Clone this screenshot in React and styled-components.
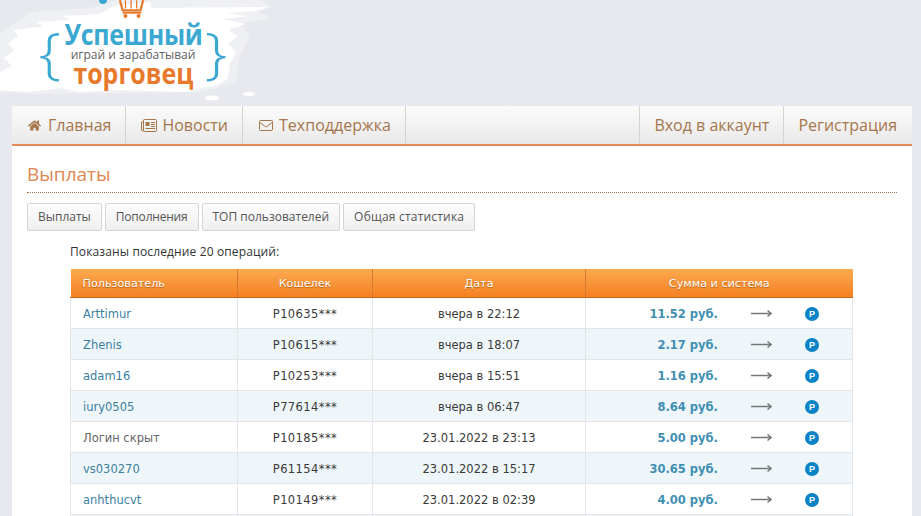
import styled, { createGlobalStyle } from "styled-components";
import { FaHome } from "react-icons/fa";

const rows = [
  { user: "Arttimur", wallet: "P10635***", date: "вчера в 22:12", sum: "11.52 руб." },
  { user: "Zhenis", wallet: "P10615***", date: "вчера в 18:07", sum: "2.17 руб." },
  { user: "adam16", wallet: "P10253***", date: "вчера в 15:51", sum: "1.16 руб." },
  { user: "iury0505", wallet: "P77614***", date: "вчера в 06:47", sum: "8.64 руб." },
  { user: "Логин скрыт", hidden: true, wallet: "P10185***", date: "23.01.2022 в 23:13", sum: "5.00 руб." },
  { user: "vs030270", wallet: "P61154***", date: "23.01.2022 в 15:17", sum: "30.65 руб." },
  { user: "anhthucvt", wallet: "P10149***", date: "23.01.2022 в 02:39", sum: "4.00 руб." },
  { user: "", wallet: "", date: "", sum: "" }
];

export default function App() {
  return (
    <>
      <GlobalStyle />
      <Page>
        <Header>
          <Logo>
            <Brush viewBox="0 0 280 106">
              {/* светлый слой мазка */}
              <path
                d="M0 34 L30 12 L90 8 L118 0 L260 0 L272 7 L258 12 L270 18 L240 24 L250 36 L238 60 L236 82 L200 92 L40 94 L0 92 Z"
                fill="#eff0f3"
              />
              {/* белый слой мазка */}
              <path
                d="M0 90 L0 72 L12 66 L4 58 L14 50 L8 44 L18 36 L14 30 L44 26 L36 22 L70 20 L62 16 L100 14 L114 6 L150 2 L152 8 L268 7 L256 11 L226 13 L250 16 L222 19 L246 24 L228 30 L238 36 L228 44 L236 52 L230 64 L228 78 L216 86 L200 88 L188 92 L120 90 L80 92 L60 88 L30 92 Z"
                fill="#fff"
              />
              <ellipse cx="212" cy="98" rx="7" ry="2.6" fill="#fff" />
              <ellipse cx="249" cy="94" rx="6" ry="2.2" fill="#fff" />
              <circle cx="103" cy="0" r="4" fill="#3ba8d2" />
            </Brush>
            <Cart viewBox="0 0 30 20">
              <path d="M2 0 L5 11 L24 11 L27 0" fill="none" stroke="#e8792b" strokeWidth="2.4" />
              <path d="M8 0 V9 M14 0 V9 M20 0 V9" stroke="#e8792b" strokeWidth="1.4" />
              <path d="M5 13.5 H25" stroke="#e8792b" strokeWidth="2" />
              <circle cx="8" cy="17" r="2.2" fill="#e8792b" />
              <circle cx="22" cy="17" r="2.2" fill="#e8792b" />
            </Cart>
            <Brace>{"{"}</Brace>
            <LogoText>
              <LogoTop>Успешный</LogoTop>
              <LogoMiddle>играй и зарабатывай</LogoMiddle>
              <LogoBottom>торговец</LogoBottom>
            </LogoText>
            <Brace>{"}"}</Brace>
          </Logo>
        </Header>
        <Wrapper>
          <Nav>
            <NavItem $gap="7px">
              <FaHome size={13} />
              Главная
            </NavItem>
            <NavItem $pad="15px">
              <NavIcon width="16" height="13" viewBox="0 0 16 13">
                <rect x="2.5" y="0.5" width="13" height="12" rx="1" fill="none" stroke="currentColor" />
                <path d="M2.5 3 H0.5 V11 A1.5 1.5 0 0 0 2.5 12" fill="none" stroke="currentColor" />
                <rect x="4.5" y="3" width="4" height="4" fill="currentColor" />
                <path d="M10 3.5 H14 M10 5.5 H14 M10 7.5 H14 M4.5 9.5 H14" stroke="currentColor" />
              </NavIcon>
              Новости
            </NavItem>
            <NavItem>
              <NavIcon width="14" height="11" viewBox="0 0 14 11">
                <rect x="0.5" y="0.5" width="13" height="10" rx="1" fill="none" stroke="currentColor" />
                <path d="M0.8 2.5 L7 7 L13.2 2.5" fill="none" stroke="currentColor" />
              </NavIcon>
              Техподдержка
            </NavItem>
            <NavSpacer />
            <NavItem $right>Вход в аккаунт</NavItem>
            <NavItem $right $last>
              Регистрация
            </NavItem>
          </Nav>
          <Content>
            <Title>Выплаты</Title>
            <Tabs>
              <Tab>Выплаты</Tab>
              <Tab $spacing="-0.2px">Пополнения</Tab>
              <Tab>ТОП пользователей</Tab>
              <Tab $spacing="0.2px">Общая статистика</Tab>
            </Tabs>
            <Note>Показаны последние 20 операций:</Note>
            <Table>
              <thead>
                <tr>
                  <HeadCell $left>Пользователь</HeadCell>
                  <HeadCell>Кошелек</HeadCell>
                  <HeadCell>Дата</HeadCell>
                  <HeadCell>Сумма и система</HeadCell>
                </tr>
              </thead>
              <tbody>
                {rows.map((row, i) => (
                  <Row key={i} $odd={i % 2 === 1}>
                    <UserCell $hidden={row.hidden}>{row.user}</UserCell>
                    <WalletCell>{row.wallet}</WalletCell>
                    <Cell>{row.date}</Cell>
                    <Cell>
                      {row.sum && (
                        <SumBox>
                          <Sum>{row.sum}</Sum>
                          <Arrow viewBox="0 0 21 9">
                            <path d="M0 4.5 H20 M16.5 1.5 L20 4.5 L16.5 7.5" fill="none" stroke="#777" strokeWidth="1.5" />
                          </Arrow>
                          <Payeer>P</Payeer>
                        </SumBox>
                      )}
                    </Cell>
                  </Row>
                ))}
              </tbody>
            </Table>
          </Content>
        </Wrapper>
      </Page>
    </>
  );
}

const GlobalStyle = createGlobalStyle`
  html, body {
    margin: 0;
    padding: 0;
    height: 516px;
    overflow: hidden;
    background: #e8e9ee;
  }
`;

const Page = styled.div`
  width: 921px;
  height: 516px;
  overflow: hidden;
`;

const Header = styled.div`
  height: 106px;
`;

const Logo = styled.div`
  position: relative;
  width: 280px;
  height: 106px;
  display: flex;
  align-items: flex-start;
  padding: 19px 0 0 40px;
  box-sizing: border-box;
`;

const Brush = styled.svg`
  position: absolute;
  left: 0;
  top: 0;
  width: 280px;
  height: 106px;
`;

const Cart = styled.svg`
  position: absolute;
  left: 118px;
  top: 0;
  width: 28px;
  height: 19px;
`;

const Brace = styled.div`
  position: relative;
  font-family: "Open Sans", sans-serif;
  font-size: 55px;
  line-height: 66px;
  font-weight: 300;
  color: #3ba8d2;
  transform: scaleX(1.15);
  width: 20px;
  text-align: center;
`;

const LogoText = styled.div`
  position: relative;
  width: 146px;
  display: flex;
  flex-direction: column;
  align-items: center;
  font-family: "Open Sans", sans-serif;
`;

const LogoTop = styled.div`
  font-size: 28px;
  line-height: 30px;
  font-weight: 700;
  color: #3ba8d2;
  letter-spacing: -0.3px;
  transform: scaleX(0.89);
`;

const LogoMiddle = styled.div`
  font-size: 12px;
  line-height: 11px;
  font-weight: 400;
  color: #5f5f5f;
`;

const LogoBottom = styled.div`
  font-size: 28px;
  line-height: 27px;
  font-weight: 700;
  color: #e8792b;
  transform: scaleX(0.89);
`;

const Wrapper = styled.div`
  margin: 0 9px 0 12px;
  background: #fff;
  height: 410px;
`;

const Nav = styled.div`
  display: flex;
  height: 38px;
  border-bottom: 2px solid #e58a58;
  background: linear-gradient(#fbfbfb, #e9e9e9);
`;

const NavItem = styled.div`
  display: flex;
  align-items: center;
  gap: ${(p) => p.$gap || "6px"};
  padding: ${(p) => (p.$right ? `0 ${p.$last ? "15px" : "14px"} 0 14px` : `0 14px 0 ${p.$pad || "16px"}`)};
  font-family: "Open Sans", sans-serif;
  font-size: 16px;
  color: #a5764c;
  border-right: ${(p) => (p.$right ? "none" : "1px solid #d8d4cc")};
  border-left: ${(p) => (p.$right ? "1px solid #d8d4cc" : "none")};
  &:nth-child(2) {
    gap: 5px;
  }
`;

const NavIcon = styled.svg`
  flex: none;
`;

const NavSpacer = styled.div`
  flex: 1;
`;

const Content = styled.div`
  padding: 16px 15px 0;
`;

const Title = styled.div`
  font-family: "Open Sans", sans-serif;
  font-size: 19px;
  line-height: 25px;
  color: #e0864f;
  padding-bottom: 5px;
  border-bottom: 1px dotted #a9703f;
`;

const Tabs = styled.div`
  display: flex;
  gap: 3px;
  margin-top: 10px;
`;

const Tab = styled.div`
  height: 26px;
  line-height: 26px;
  padding: 0 10px;
  font-family: "Open Sans", sans-serif;
  font-size: 12px;
  letter-spacing: ${(p) => p.$spacing || "0"};
  color: #555;
  border: 1px solid #d5d5d5;
  border-radius: 2px;
  background: linear-gradient(#fdfdfd, #efefef);
`;

const Note = styled.div`
  margin: 13px 0 0 43px;
  font-family: "Open Sans", sans-serif;
  font-size: 12px;
  letter-spacing: 0.13px;
  line-height: 16px;
  color: #333;
`;

const Table = styled.table`
  width: 783px;
  margin: 9px 0 0 43px;
  border-collapse: collapse;
  table-layout: fixed;
  font-family: "DejaVu Sans", sans-serif;
  font-size: 11.5px;
`;

const HeadCell = styled.th`
  box-sizing: border-box;
  height: 28px;
  padding: ${(p) => (p.$left ? "2px 0 0 12px" : "2px 0 0")};
  text-align: ${(p) => (p.$left ? "left" : "center")};
  font-weight: 400;
  font-size: 11.2px;
  color: #fff;
  text-shadow: 0 1px 1px #b25f17;
  background: linear-gradient(#fdaa4f, #f47f23);
  border-bottom: 1px solid #c9661b;
  border-right: 1px solid #d47a33;
  &:nth-child(1) { width: 167px; }
  &:nth-child(2) { width: 135px; }
  &:nth-child(3) { width: 213px; }
  &:last-child { border-right: none; }
`;

const Row = styled.tr`
  background: ${(p) => (p.$odd ? "#eef6f9" : "#fff")};
`;

const Cell = styled.td`
  box-sizing: border-box;
  height: 31px;
  padding: 2px 0 0;
  text-align: center;
  color: #3a3a3a;
  border: 1px solid #e3e6e8;
`;

const WalletCell = styled(Cell)`
  letter-spacing: 0.4px;
`;

const UserCell = styled(Cell)`
  text-align: left;
  padding-left: 12px;
  color: ${(p) => (p.$hidden ? "#666" : "#3b7f9f")};
`;

const SumBox = styled.div`
  display: flex;
  align-items: center;
`;

const Sum = styled.div`
  width: 132px;
  text-align: right;
  font-weight: 700;
  font-size: 11.5px;
  color: #3f8fb3;
`;

const Arrow = styled.svg`
  width: 21px;
  height: 9px;
  margin-left: 33px;
`;

const Payeer = styled.div`
  width: 14px;
  height: 14px;
  margin-left: 33px;
  border-radius: 50%;
  background: #0a84c6;
  color: #fff;
  font-family: "Liberation Sans", sans-serif;
  font-weight: 700;
  font-size: 9px;
  line-height: 14px;
  text-align: center;
`;
